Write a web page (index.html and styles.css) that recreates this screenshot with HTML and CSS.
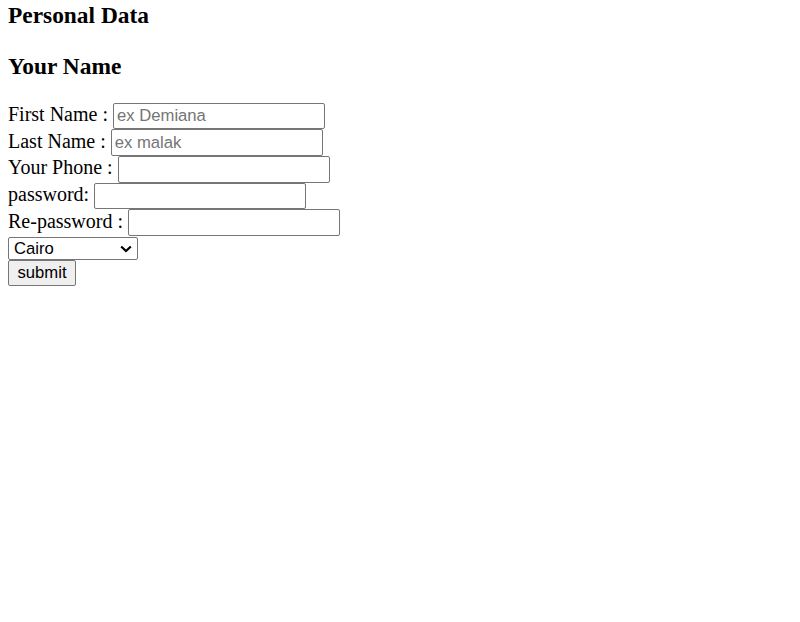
FILE: index.html
```html
<!DOCTYPE html>
<html>
<head>
<meta charset="utf-8">
<title>Personal Data</title>
<link rel="stylesheet" href="styles.css">
</head>
<body>
<h3 class="title first">Personal Data</h3>
<h3 class="title second">Your Name</h3>
<form class="form">
<label>First Name : <input class="field" type="text" placeholder="ex Demiana"></label><br>
<label>Last Name : <input class="field" type="text" placeholder="ex malak"></label><br>
<label>Your Phone : <input class="field" type="tel"></label><br>
<label>password: <input class="field" type="password"></label><br>
<label>Re-password : <input class="field" type="password"></label><br>
<select class="city">
<option>Cairo</option>
<option>Alexandria</option>
<option>Giza</option>
</select><br>
<button class="submit" type="submit">submit</button>
</form>
</body>
</html>
```
FILE: styles.css
```css
body {
  margin: 0 8px 8px;
  font-family: "Liberation Serif", "Times New Roman", serif;
  font-size: 20px;
  color: #000;
  background: #fff;
}
.title {
  font-size: 23.4px;
  font-weight: bold;
  margin: 23.4px 0;
}
.title.first {
  margin-top: 2px;
}
.title.second {
  margin-top: 24.4px;
  margin-bottom: 22.4px;
}
.form {
  margin: 0;
}
.field {
  box-sizing: border-box;
  width: 212px;
  height: 26.67px;
  font-family: "Liberation Sans", Arial, sans-serif;
  font-size: 16.67px;
  padding: 1px 3px;
  border: 1px solid #767676;
  border-radius: 2px;
  margin: 0;
  vertical-align: baseline;
}
.field::placeholder {
  color: #757575;
}
.city {
  -webkit-appearance: none;
  appearance: none;
  box-sizing: border-box;
  width: 130px;
  height: 23px;
  font-family: "Liberation Sans", Arial, sans-serif;
  font-size: 16.67px;
  padding: 0 20px 0 5px;
  border: 1px solid #767676;
  border-radius: 2px;
  margin: 0;
  color: #000;
  background: #fff url("data:image/svg+xml,%3Csvg xmlns='http://www.w3.org/2000/svg' width='12' height='8' viewBox='0 0 12 8'%3E%3Cpath d='M1.2 1.5 L6 6 L10.8 1.5' fill='none' stroke='%23000' stroke-width='2.2'/%3E%3C/svg%3E") no-repeat right 5px center;
}
.submit {
  box-sizing: border-box;
  width: 68px;
  height: 26px;
  font-family: "Liberation Sans", Arial, sans-serif;
  font-size: 16.67px;
  padding: 1px 6px;
  border: 1px solid #767676;
  border-radius: 2px;
  background: #efefef;
  color: #000;
  margin: 0;
}
```
